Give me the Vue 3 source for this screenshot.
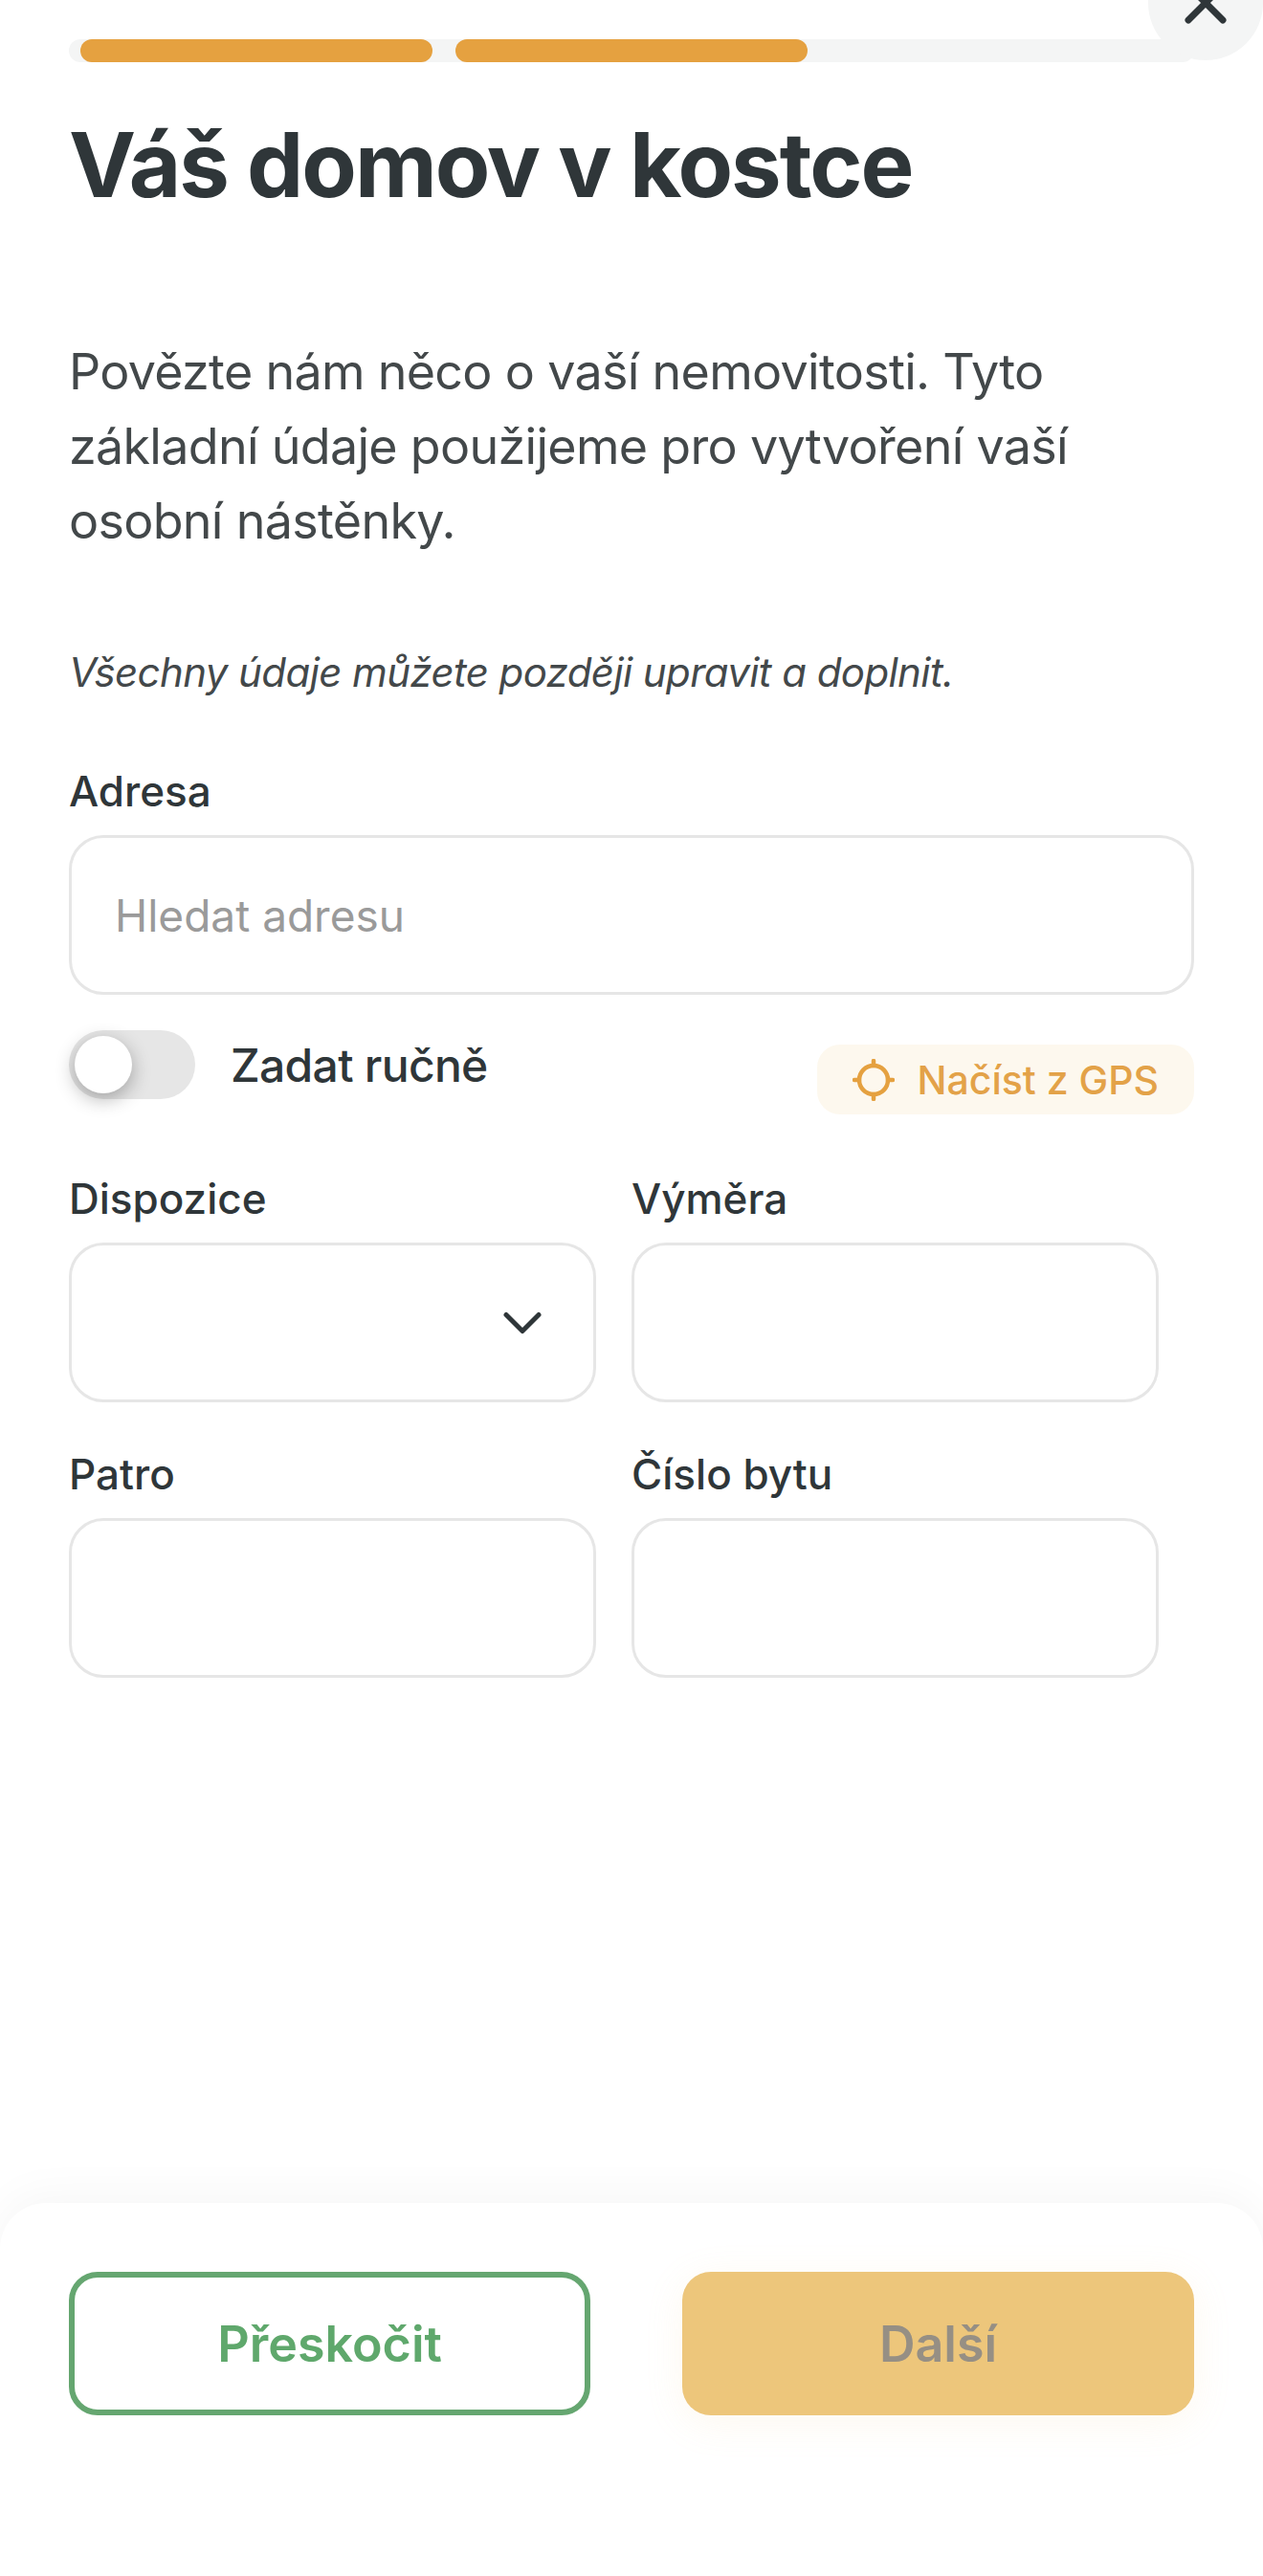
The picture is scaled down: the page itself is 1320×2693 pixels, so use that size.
<template>
  <div class="page">
    <button class="close" aria-label="Zavřít">
      <svg width="44" height="44" viewBox="0 0 44 44" fill="none">
        <path d="M4 4L40 40M40 4L4 40" stroke="#2f3639" stroke-width="7" stroke-linecap="round" />
      </svg>
    </button>

    <div class="progress">
      <div v-for="step in steps" :key="step" class="segment" :class="{ done: step <= current }"></div>
    </div>

    <main class="content">
      <h1>Váš domov v kostce</h1>
      <p class="intro">Povězte nám něco o vaší nemovitosti. Tyto základní údaje použijeme pro vytvoření vaší osobní nástěnky.</p>
      <p class="note">Všechny údaje můžete později upravit a doplnit.</p>

      <label class="label">Adresa</label>
      <input class="field wide" type="text" placeholder="Hledat adresu" />

      <div class="address-actions">
        <div class="manual">
          <span class="toggle"><span class="knob"></span></span>
          <span class="manual-text">Zadat ručně</span>
        </div>
        <button class="gps">
          <svg width="44" height="44" viewBox="0 0 44 44" fill="none" stroke="#e5a140" stroke-linecap="round">
            <circle cx="22" cy="22" r="15" stroke-width="4.5" />
            <path d="M22 2V7M22 37V42M2 22H7M37 22H42" stroke-width="4.5" />
          </svg>
          Načíst z GPS
        </button>
      </div>

      <div class="grid">
        <div v-for="item in fields" :key="item.label" class="cell">
          <label class="label">{{ item.label }}</label>
          <div v-if="item.select" class="field select">
            <svg width="40" height="24" viewBox="0 0 40 24" fill="none">
              <path d="M3 3.5L20 20.5L37 3.5" stroke="#2f3639" stroke-width="5" stroke-linecap="round" stroke-linejoin="round" />
            </svg>
          </div>
          <input v-else class="field" type="text" />
        </div>
      </div>
    </main>

    <footer class="footer">
      <button class="btn skip">Přeskočit</button>
      <button class="btn next">Další</button>
    </footer>
  </div>
</template>

<script setup>
const steps = [1, 2, 3]
const current = 2

const fields = [
  { label: 'Dispozice', select: true },
  { label: 'Výměra' },
  { label: 'Patro' },
  { label: 'Číslo bytu' }
]
</script>

<style>
html,
body {
  margin: 0;
  background: #fff;
  overflow: hidden;
}
</style>

<style scoped>
.page {
  position: relative;
  display: flex;
  flex-direction: column;
  min-height: 100vh;
  overflow: hidden;
  background: #fff;
  color: #2f3639;
  font-family: Inter, "Liberation Sans", sans-serif;
  box-sizing: border-box;
  padding-top: 41px;
}

.close {
  position: absolute;
  top: -57px;
  right: 0;
  width: 120px;
  height: 120px;
  padding: 0;
  border: none;
  border-radius: 50%;
  background: #f4f5f5;
  display: flex;
  align-items: center;
  justify-content: center;
}

.progress {
  display: flex;
  gap: 24px;
  height: 24px;
  margin: 0 72px;
  padding: 0 12px;
  background: #f4f5f5;
  border-radius: 12px;
}

.segment {
  flex: 1;
  border-radius: 12px;
}

.segment.done {
  background: #e5a140;
}

.content {
  padding: 0 72px;
}

h1 {
  margin: 0;
  padding-top: 51px;
  font-size: 94px;
  line-height: 112px;
  font-weight: 700;
  letter-spacing: -2px;
  color: #2f3639;
}

.intro {
  margin: 122px 0 0;
  font-size: 52px;
  line-height: 78px;
  letter-spacing: -0.7px;
  color: #43484a;
}

.note {
  margin: 89px 0 0;
  font-size: 42px;
  line-height: 60px;
  letter-spacing: -0.6px;
  font-style: italic;
  color: #43484a;
}

.label {
  display: block;
  font-size: 44px;
  line-height: 60px;
  font-weight: 500;
  margin-bottom: 16px;
  color: #2f3639;
}

.content > .label {
  margin-top: 64px;
}

.field {
  display: block;
  box-sizing: border-box;
  width: 551px;
  height: 167px;
  border: 3px solid #e6e6e6;
  border-radius: 36px;
  background: #fff;
  padding: 0 45px;
  font-family: inherit;
  font-size: 46px;
  outline: none;
}

.field.wide {
  width: 100%;
}

.field::placeholder {
  color: #9a9a9a;
  opacity: 1;
}

.select {
  display: flex;
  align-items: center;
  justify-content: flex-end;
  padding-right: 54px;
}

.address-actions {
  display: flex;
  justify-content: space-between;
  align-items: flex-start;
  margin-top: 37px;
}

.manual {
  display: flex;
  align-items: center;
  gap: 37px;
}

.toggle {
  position: relative;
  display: block;
  width: 132px;
  height: 72px;
  border-radius: 36px;
  background: #e6e6e6;
}

.knob {
  position: absolute;
  left: 6px;
  top: 6px;
  width: 60px;
  height: 60px;
  border-radius: 50%;
  background: #fff;
  box-shadow: 0 6px 20px rgba(0, 0, 0, 0.3);
}

.manual-text {
  font-size: 48px;
  letter-spacing: -0.7px;
  font-weight: 500;
  color: #2f3639;
}

.gps {
  display: flex;
  align-items: center;
  gap: 23px;
  height: 73px;
  margin-top: 15px;
  padding: 0 37px;
  border: none;
  border-radius: 24px;
  background: #fdf8ee;
  color: #e3a248;
  font-family: inherit;
  font-size: 41px;
  font-weight: 500;
}

.grid {
  display: grid;
  grid-template-columns: 551px 551px;
  column-gap: 37px;
  row-gap: 45px;
  margin-top: 58px;
}

.footer {
  margin-top: auto;
  height: 390px;
  box-sizing: border-box;
  padding: 72px 72px 0;
  display: flex;
  justify-content: space-between;
  align-items: flex-start;
  background: #fff;
  border-radius: 48px 48px 0 0;
  box-shadow: 0 -8px 48px rgba(0, 0, 0, 0.04);
}

.btn {
  box-sizing: border-box;
  height: 150px;
  border-radius: 30px;
  font-family: inherit;
  font-size: 52px;
  font-weight: 600;
}

.skip {
  width: 545px;
  border: 6px solid #65a670;
  background: #fff;
  color: #5fa86c;
}

.next {
  width: 535px;
  border: none;
  background: #edc67b;
  color: #968f84;
  box-shadow: 0 8px 40px rgba(237, 198, 123, 0.12);
}
</style>
